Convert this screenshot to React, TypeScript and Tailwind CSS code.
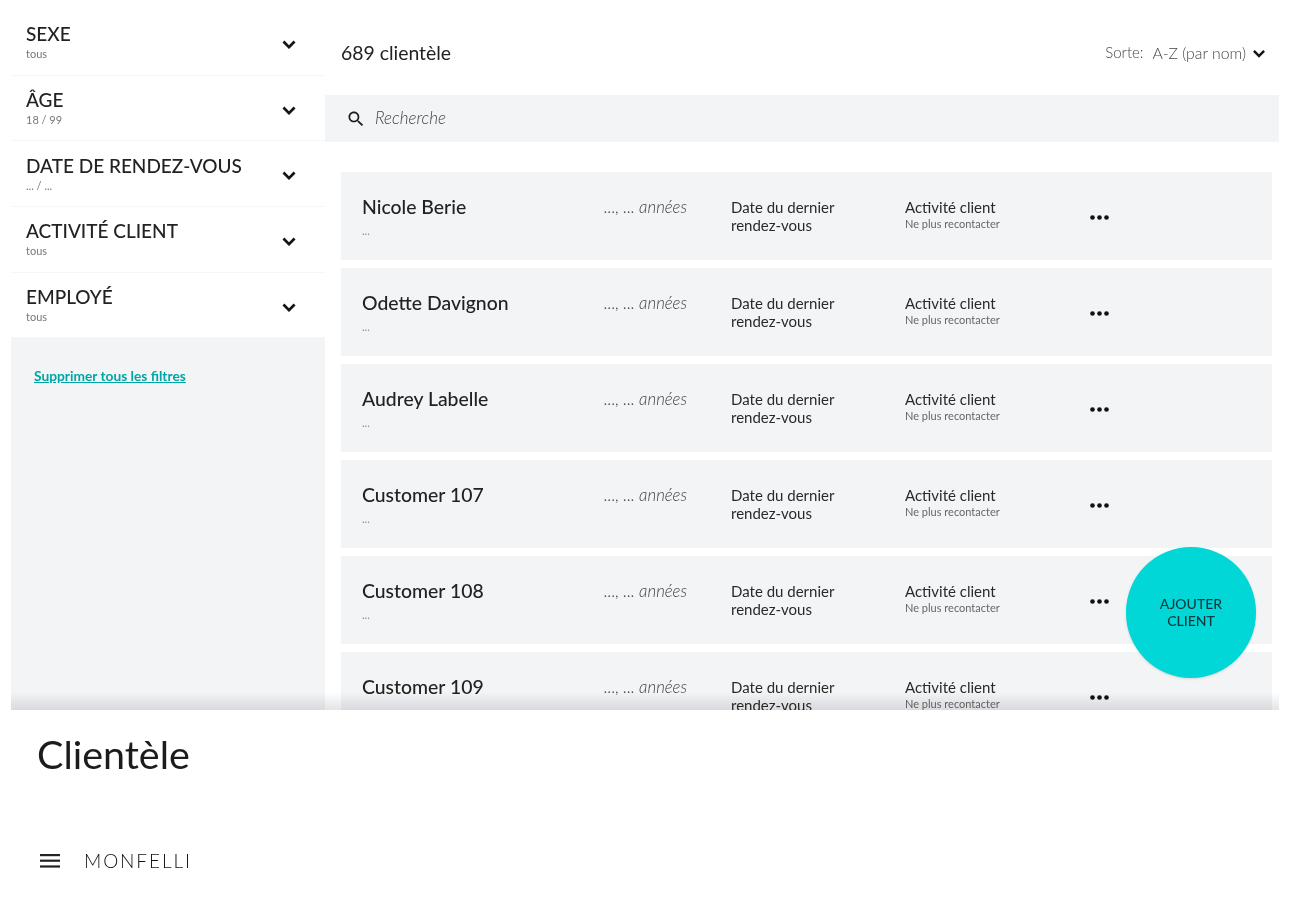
import React from "react";

const Chevron = ({ className }: { className?: string }) => (
  <svg viewBox="0 0 24 24" className={className} fill="currentColor">
    <path d="M16.59 7.59L12 12.17 7.41 7.59 5.5 9.5l6.5 6.5 6.5-6.5z" />
  </svg>
);

const filters = [
  ["SEXE", "tous"],
  ["ÂGE", "18 / 99"],
  ["DATE DE RENDEZ-VOUS", "... / ..."],
  ["ACTIVITÉ CLIENT", "tous"],
  ["EMPLOYÉ", "tous"],
];

const customers = ["Nicole Berie", "Odette Davignon", "Audrey Labelle", "Customer 107", "Customer 108", "Customer 109"];

function FilterItem({ label, sub }: { label: string; sub: string }) {
  return (
    <div className="h-[65.7px] shrink-0 bg-white border-b border-[#f6f7f8] flex items-center pl-[15px] pr-[24px]">
      <div className="flex-1 -mt-[3px]">
        <div className="text-[19px] leading-[26px] font-medium text-[#222]">{label}</div>
        <div className="text-[11px] leading-[12px] mt-[1px] text-[#777]">{sub}</div>
      </div>
      <Chevron className="w-[24px] h-[24px] mt-[5px] text-[#151515]" />
    </div>
  );
}

function Row({ name }: { name: string }) {
  return (
    <div className="h-[88px] shrink-0 bg-[#f3f4f6] flex text-[#2a2a2a]">
      <div className="w-[263px] pl-[21px] pt-[20.5px]">
        <div className="text-[19.4px] leading-[28px] font-medium text-[#222]">{name}</div>
        <div className="text-[11px] leading-[14px] mt-[3px] text-[#888]">...</div>
      </div>
      <div className="w-[127px] pt-[25px] text-[16.8px] leading-[20px] italic font-light text-[#444]">
        ..., ... années
      </div>
      <div className="w-[174px] pt-[25.5px] text-[15px] leading-[18.5px]">
        Date du dernier
        <br />
        rendez-vous
      </div>
      <div className="w-[185px] pt-[26px]">
        <div className="text-[15px] leading-[18px]">Activité client</div>
        <div className="text-[11px] leading-[13px] mt-[0.5px] text-[#666]">Ne plus recontacter</div>
      </div>
      <div className="pt-[43px]">
        <svg viewBox="0 0 19 5" className="w-[19px] h-[5px] block" fill="#111">
          <circle cx="2.5" cy="2.5" r="2.3" />
          <circle cx="9.5" cy="2.5" r="2.3" />
          <circle cx="16.5" cy="2.5" r="2.3" />
        </svg>
      </div>
    </div>
  );
}

export default function App() {
  return (
    <div className="h-[902px] w-[1289px] bg-white overflow-hidden flex flex-col font-['Lato',sans-serif]">
      <div className="relative h-[710px] shrink-0 mx-[10px] pl-px pt-[10px] flex overflow-hidden">
        <aside className="w-[314px] shrink-0 bg-[#f3f4f6] flex flex-col">
          {filters.map(([l, s]) => (
            <FilterItem key={l} label={l} sub={s} />
          ))}
          <a className="ml-[23px] mt-[28.5px] text-[13.75px] leading-[18px] font-bold text-[#00a5a5] underline">
            Supprimer tous les filtres
          </a>
        </aside>
        <main className="flex-1 min-w-0 flex flex-col">
          <div className="h-[85px] shrink-0 flex items-center justify-between pl-[16px] pr-[9px]">
            <span className="text-[19.4px] text-[#222]">689 clientèle</span>
            <div className="flex items-center font-light text-[#444]">
              <span className="text-[15px]">Sorte:</span>
              <span className="ml-[9px] text-[15.8px]">A-Z (par nom)</span>
              <Chevron className="w-[22px] h-[22px] ml-[2px] mt-[2px] text-[#151515]" />
            </div>
          </div>
          <div className="h-[47px] shrink-0 bg-[#f3f4f6] flex items-center pl-[21px]">
            <svg viewBox="0 0 24 24" className="w-[20px] h-[20px] text-[#1a1a1a]" fill="currentColor">
              <path d="M15.5 14h-.79l-.28-.27C15.41 12.59 16 11.11 16 9.5 16 5.91 13.09 3 9.5 3S3 5.91 3 9.5 5.91 16 9.5 16c1.61 0 3.09-.59 4.23-1.57l.27.28v.79l5 4.99L20.49 19l-4.99-5zm-6 0C7.01 14 5 11.99 5 9.5S7.01 5 9.5 5 14 7.01 14 9.5 11.99 14 9.5 14z" />
            </svg>
            <span className="ml-[9px] text-[17px] italic font-light text-[#444] -mt-[2px]">Recherche</span>
          </div>
          <div className="mt-[30px] ml-[16px] mr-[7px] flex flex-col gap-[8px]">
            {customers.map((c) => (
              <Row key={c} name={c} />
            ))}
          </div>
        </main>
        <div className="absolute left-px right-0 bottom-0 h-[18px] bg-gradient-to-b from-white to-[#e3e4e6] mix-blend-multiply" />
        <button className="absolute left-[1116px] top-[547px] w-[130px] h-[131px] rounded-full bg-[#00d7d6] shadow-sm flex items-center justify-center text-center text-[14px] leading-[17px] font-medium text-[#10393f] pb-[2px]">
          AJOUTER
          <br />
          CLIENT
        </button>
      </div>
      <div className="flex-1 flex flex-col pl-[37px]">
        <h1 className="mt-[19px] text-[39.5px] leading-[50px] text-[#1c1c1c]">Clientèle</h1>
        <div className="mt-[72px] flex items-center">
          <svg viewBox="0 0 20 14" className="ml-[3px] w-[20px] h-[14px]" fill="#222">
            <rect y="0" width="20" height="2.2" />
            <rect y="5.6" width="20" height="2.2" />
            <rect y="11.4" width="20" height="2.2" />
          </svg>
          <span className="ml-[24px] text-[19px] leading-[20px] tracking-[1.9px] font-light text-[#111]">MONFELLI</span>
        </div>
      </div>
    </div>
  );
}
